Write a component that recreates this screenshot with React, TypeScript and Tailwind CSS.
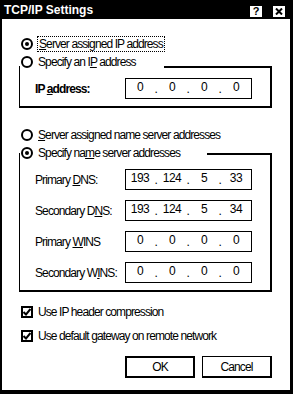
import React from "react";

const FONT = { fontFamily: '"Liberation Sans", Arial, sans-serif' };

function Radio({ checked }: { checked?: boolean }) {
  return (
    <span className="flex h-[12px] w-[12px] shrink-0 items-center justify-center rounded-full border-2 border-black bg-white">
      {checked && <span className="h-[4px] w-[4px] rounded-full bg-black" />}
    </span>
  );
}

function Check() {
  return (
    <span className="flex h-[12px] w-[12px] shrink-0 items-center justify-center border-2 border-black bg-white">
      <svg width="8" height="8" viewBox="0 0 8 8" aria-hidden="true">
        <path d="M0.5 4 L3 6.5 L7.5 1" fill="none" stroke="black" strokeWidth="2" />
      </svg>
    </span>
  );
}

function IpBox({ parts }: { parts: string[] }) {
  return (
    <div className="flex h-[21px] w-[127px] border border-black bg-white tracking-[-0.5px]">
      {parts.map((p, i) => (
        <React.Fragment key={i}>
          {i > 0 && <span className="flex w-[4px] items-end justify-center pb-[3px] text-[12px] leading-[12px]">.</span>}
          <span className="w-[28px] pt-[1px] text-center text-[12px] leading-[14px]">{p}</span>
        </React.Fragment>
      ))}
    </div>
  );
}

function Row({ label, parts }: { label: React.ReactNode; parts: string[] }) {
  return (
    <div className="flex items-center">
      <span className="w-[90px] whitespace-nowrap text-[12px] leading-[14px]">{label}</span>
      <IpBox parts={parts} />
    </div>
  );
}

export default function App() {
  return (
    <div
      style={FONT}
      className="flex h-[394px] w-[293px] flex-col border-b-4 border-l-2 border-r-[3px] border-black bg-white text-black"
    >
      {/* title bar */}
      <div className="flex h-[19px] shrink-0 items-center bg-black pl-[2px] pr-[5px]">
        <span className="flex-1 text-[12px] font-bold leading-[14px] text-white">TCP/IP Settings</span>
        <span className="mt-[4px] flex h-[11px] w-[12px] items-center justify-center bg-white text-[11px] font-bold leading-[11px]">
          ?
        </span>
        <span className="ml-[11px] mt-[4px] flex h-[11px] w-[12px] items-center justify-center bg-white">
          <svg width="8" height="7" viewBox="0 0 8 7" aria-hidden="true">
            <path d="M1 0.5 L7 6.5 M7 0.5 L1 6.5" stroke="black" strokeWidth="2" />
          </svg>
        </span>
      </div>

      <div className="flex flex-1 flex-col whitespace-nowrap pl-[17px] pr-[18px] text-[12px] tracking-[-0.9px]">
        <div className="mt-[17px] flex h-[16px] items-center gap-[4px] pl-[2px]">
          <Radio checked />
          <span className="border border-dotted border-black px-[1px] leading-[14px]">
            <u>S</u>erver assigned IP address
          </span>
        </div>

        <fieldset className="mt-[3px] border-b-2 border-l border-r-2 border-t-2 border-black">
          <legend className="pb-[9px] pl-[1px] pr-[28px]">
            <span className="flex h-[14px] items-center gap-[5px]">
              <Radio />
              <span className="leading-[14px]">
                Specify an I<u>P</u> address
              </span>
            </span>
          </legend>
          <div className="pb-[7px] pl-[15px]">
            <Row
              label={
                <span className="font-bold">
                  IP <u>a</u>ddress:
                </span>
              }
              parts={["0", "0", "0", "0"]}
            />
          </div>
        </fieldset>

        <div className="mt-[20px] flex h-[14px] items-center gap-[5px] pl-[2px]">
          <Radio />
          <span className="leading-[14px]">
            <u>S</u>erver assigned name server addresses
          </span>
        </div>

        <fieldset className="mt-[4px] border-b-2 border-l border-r-2 border-t-2 border-black">
          <legend className="pb-[2px] pl-[1px] pr-[27px]">
            <span className="flex h-[14px] items-center gap-[5px]">
              <Radio checked />
              <span className="leading-[14px]">
                Specify na<u>m</u>e server addresses
              </span>
            </span>
          </legend>
          <div className="flex flex-col gap-[10px] pb-[7px] pl-[15px] pt-[7px]">
            <Row
              label={
                <>
                  Primary <u>D</u>NS:
                </>
              }
              parts={["193", "124", "5", "33"]}
            />
            <Row
              label={
                <>
                  Secondary D<u>N</u>S:
                </>
              }
              parts={["193", "124", "5", "34"]}
            />
            <Row
              label={
                <>
                  Primary <u>W</u>INS
                </>
              }
              parts={["0", "0", "0", "0"]}
            />
            <Row
              label={
                <>
                  Secondary W<u>I</u>NS:
                </>
              }
              parts={["0", "0", "0", "0"]}
            />
          </div>
        </fieldset>

        <div className="mt-[13px] flex h-[14px] items-center gap-[5px] pl-[2px]">
          <Check />
          <span className="leading-[14px]">Use IP header compression</span>
        </div>
        <div className="mt-[10px] flex h-[14px] items-center gap-[5px] pl-[2px]">
          <Check />
          <span className="leading-[14px]">
            Use default <u>g</u>ateway on remote network
          </span>
        </div>

        <div className="mt-[13px] flex justify-end gap-[7px]">
          <button className="h-[22px] w-[70px] border-2 border-black bg-white text-[12px] leading-[14px]">
            OK
          </button>
          <button className="h-[22px] w-[70px] border border-b-2 border-r-2 border-black bg-white text-[12px] leading-[14px]">
            Cancel
          </button>
        </div>
      </div>
    </div>
  );
}
